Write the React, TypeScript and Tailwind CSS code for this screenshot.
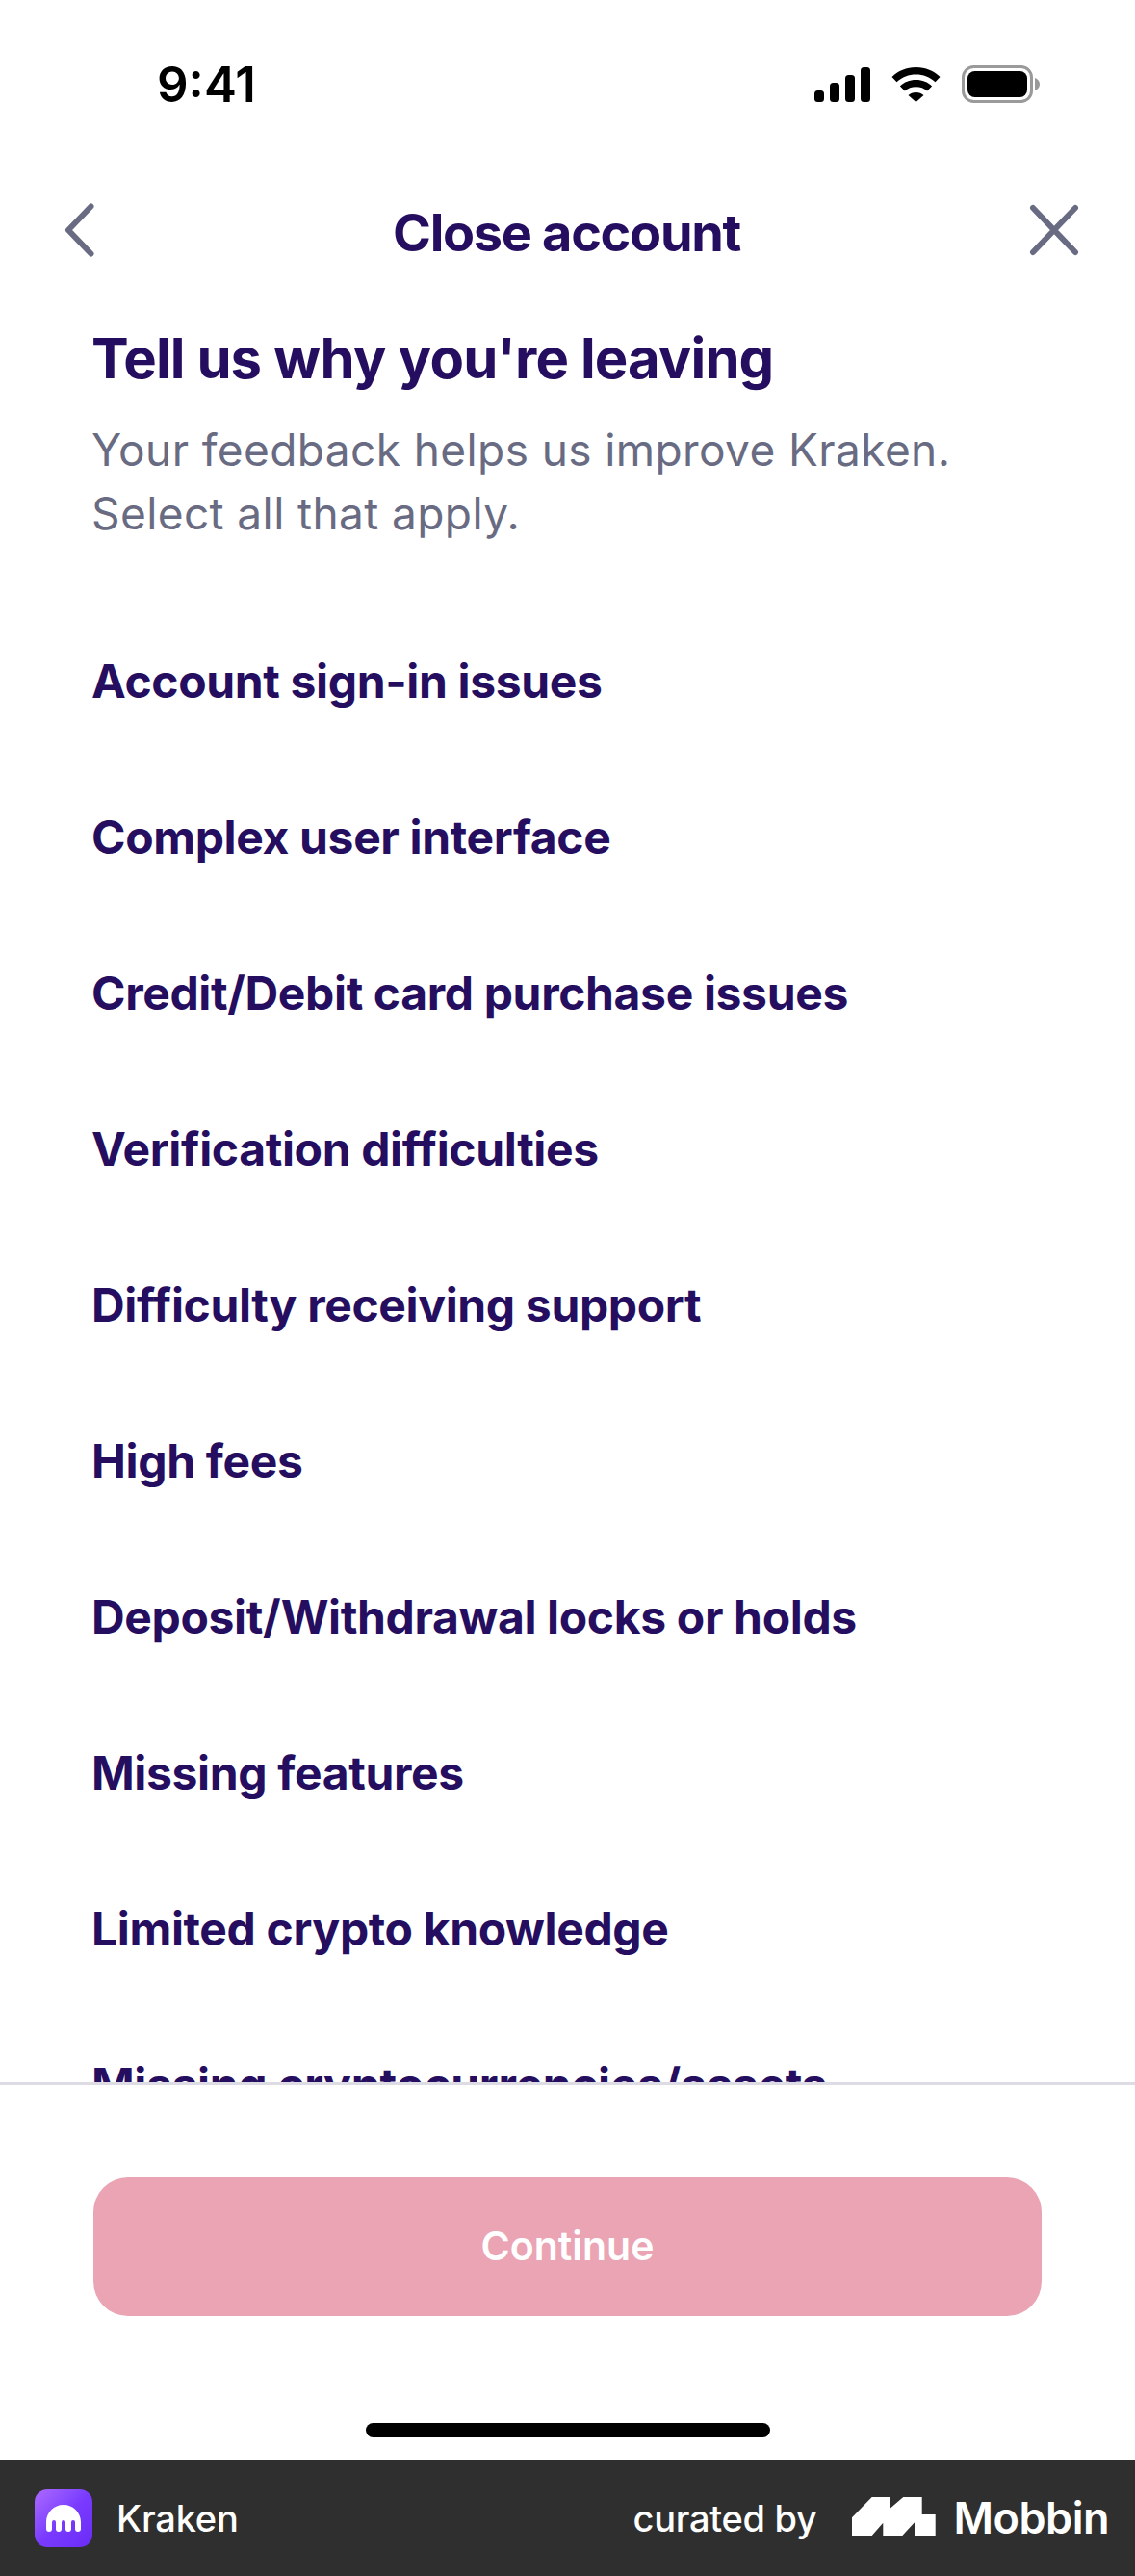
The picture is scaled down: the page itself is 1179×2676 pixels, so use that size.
const items = [
  "Account sign-in issues",
  "Complex user interface",
  "Credit/Debit card purchase issues",
  "Verification difficulties",
  "Difficulty receiving support",
  "High fees",
  "Deposit/Withdrawal locks or holds",
  "Missing features",
  "Limited crypto knowledge",
  "Missing cryptocurrencies/assets",
];

export default function App() {
  return (
    <div className="flex h-[2676px] w-[1179px] flex-col overflow-hidden bg-white font-['Inter',sans-serif]">
      <div className="flex h-[174px] shrink-0 items-start justify-between pt-[61px] pl-[163px] pr-[98px]">
        <span className="font-['Inter',sans-serif] text-[51px] leading-[54px] font-semibold text-black">9:41</span>
        <div className="flex items-center gap-[22px] pt-[7px]">
          <svg width="58" height="36" viewBox="0 0 58 36" fill="#000">
            <rect x="0" y="24" width="10" height="12" rx="3.5" />
            <rect x="16" y="16" width="10" height="20" rx="3.5" />
            <rect x="32" y="8" width="10" height="28" rx="3.5" />
            <rect x="48" y="0" width="10" height="36" rx="3.5" />
          </svg>
          <svg width="51" height="36" viewBox="0 0 51 36" fill="#000">
            <path d="M25.5 0C15.5 0 7 3.8 0.5 10l5 5.2C11 10 18 7.4 25.5 7.4S40 10 45.5 15.2l5-5.2C44 3.8 35.5 0 25.5 0Z" />
            <path d="M25.5 13c-6.6 0-12.4 2.4-16.6 6.4l5 5.2c3-2.8 7-4.3 11.6-4.3s8.6 1.5 11.6 4.3l5-5.2C37.9 15.400 32.100 13 25.500 13Z" />
            <path d="M25.500 26c-3.200 0-5.800 1-8 3l8 7 8-7c-2.200-2-4.800-3-8-3Z" />
          </svg>
          <svg width="82" height="39" viewBox="0 0 82 39">
            <rect x="1.500" y="1.500" width="71" height="36" rx="11" fill="none" stroke="#9a9a9a" strokeWidth="3" />
            <rect x="6" y="6" width="62" height="27" rx="7.500" fill="#000" />
            <path d="M76 13c3 1 5 3.500 5 6.500s-2 5.500-5 6.500Z" fill="#9a9a9a" />
          </svg>
        </div>
      </div>

      <div className="relative flex h-[136px] shrink-0 items-center justify-center pb-[1px]">
        <svg className="absolute left-[66px] top-[37px]" width="32" height="56" viewBox="0 0 32 56" fill="none" stroke="#686b82" strokeWidth="6" strokeLinecap="round" strokeLinejoin="round">
          <path d="M28.500 3.500 L5 28 L28.500 52.500" />
        </svg>
        <span className="mr-[2px] text-[54px] leading-[60px] font-bold tracking-[-1.300px] text-[#250e5f]">Close account</span>
        <svg className="absolute left-[1068px] top-[38px]" width="54" height="54" viewBox="0 0 54 54" fill="none" stroke="#686b82" strokeWidth="6" strokeLinecap="round">
          <path d="M5 4 L49 50 M49 4 L5 50" />
        </svg>
      </div>

      <div className="flex min-h-0 flex-1 flex-col overflow-hidden">
        <div className="px-[95px]">
          <h1 className="mt-[26px] text-[58px] leading-[72px] font-bold tracking-[-0.900px] text-[#250e5f]">Tell us why you're leaving</h1>
          <p className="mt-[26px] text-[46px] leading-[66px] font-normal tracking-[0.400px] text-[#686b82]">
            Your feedback helps us improve Kraken.
            <br />
            Select all that apply.
          </p>
        </div>
        <ul className="mt-[61px] flex flex-col px-[95px]">
          {items.map((item) => (
            <li key={item} className="flex h-[162px] shrink-0 items-center text-[48px] leading-[60px] font-bold tracking-[-0.350px] text-[#250e5f]">
              {item}
            </li>
          ))}
        </ul>
      </div>

      <div className="flex h-[393px] shrink-0 flex-col items-center border-t-[3px] border-[#dddce4]">
        <button className="mt-[96px] flex h-[144px] w-[985px] items-center justify-center rounded-[36px] bg-[#eba4b3] text-[41px] font-semibold text-white">
          Continue
        </button>
        <div className="mt-[111px] h-[15px] w-[420px] rounded-full bg-black" />
      </div>

      <div className="flex h-[120px] shrink-0 items-center justify-between bg-[#2f2f2f] pl-[36px] pr-[27px]">
        <div className="flex items-center gap-[25px]">
          <div className="flex size-[60px] items-center justify-center rounded-[13px] bg-gradient-to-br from-[#ad68ff] via-[#7a3bff] to-[#6a2bf5]">
            <svg width="36" height="28" viewBox="0 0 36 28" fill="#fff">
              <path d="M18 0C8 0 0 8 0 18v7a3 3 0 0 0 6 0v-7a2 2 0 0 1 4 0v7a3 3 0 0 0 6 0v-7a2 2 0 0 1 4 0v7a3 3 0 0 0 6 0v-7a2 2 0 0 1 4 0v7a3 3 0 0 0 6 0v-7C36 8 28 0 18 0Z" />
            </svg>
          </div>
          <span className="text-[38px] leading-[44px] font-medium tracking-[-0.200px] text-white">Kraken</span>
        </div>
        <div className="flex items-center">
          <span className="text-[38px] leading-[44px] font-medium tracking-[-0.300px] text-white">curated by</span>
          <svg className="mb-[4px] ml-[36px]" width="87" height="40" viewBox="0 0 87 40" fill="#fff">
            <path d="M0 21.300 L20.700 0 H39 V12.300 L53.300 0 H72.700 V18 H86.700 V40 H65 V26.300 L52.300 40 H32.300 V26.700 L20.700 40 H0 Z" />
          </svg>
          <span className="ml-[19px] text-[45px] leading-[50px] font-semibold tracking-[-0.500px] text-white">Mobbin</span>
        </div>
      </div>
    </div>
  );
}
